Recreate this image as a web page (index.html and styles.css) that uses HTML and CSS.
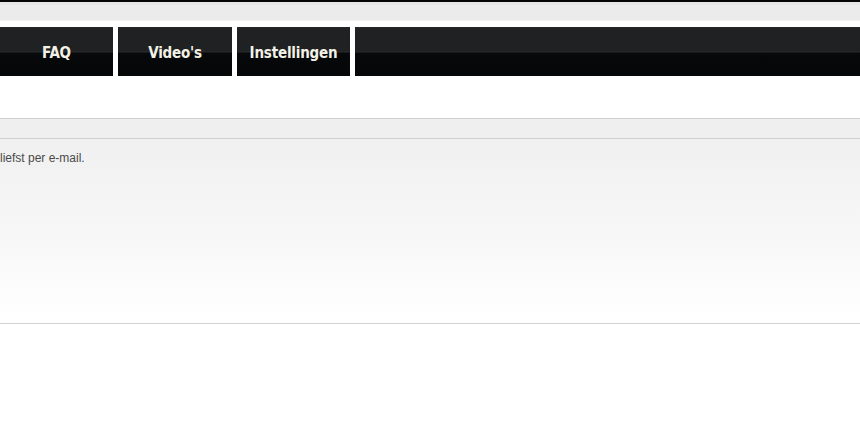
FILE: index.html
```html
<!DOCTYPE html>
<html>
<head>
    <title>FAQ</title>
    <meta charset="UTF-8">
    <meta name="viewport" content="width=device-width, initial-scale=1.0">
    <link rel="stylesheet" href="styles.css">
</head>

<body>
    <div class="topbar"></div>
    <div class="subbar"></div>

    <!-- Main menu -->
    <nav class="menu">
        <a class="menu-item" href="#">FAQ</a>
        <a class="menu-item wide" href="#">Video's</a>
        <a class="menu-item" href="#">Instellingen</a>
        <span class="menu-rest"></span>
    </nav>

    <div class="content">
        <div class="panel-head"></div>
        <div class="panel-body">
            <p class="note">liefst per e-mail.</p>
        </div>
    </div>
</body>
</html>
```

FILE: styles.css
```css
/* Basic Reset */
* {
    box-sizing: border-box;
    margin: 0;
    padding: 0;
}

body {
    background: #ffffff;
    font-family: 'Liberation Sans', Arial, sans-serif;
    width: 860px;
    height: 448px;
    overflow: hidden;
}

/* Top strips */
.topbar {
    height: 2px;
    background: #050505;
}

.subbar {
    height: 19px;
    background: #ebebeb;
    border-top: 3px solid #e6e6e6;
    border-bottom: 1px solid #f2f2f2;
}

/* Menu */
.menu {
    display: grid;
    grid-template-columns: 113px 114px 113px 1fr;
    gap: 5px;
    margin-top: 6px;
    height: 49px;
}

.menu-item,
.menu-rest {
    display: flex;
    align-items: center;
    justify-content: center;
    background: linear-gradient(to bottom, #272a2b 0, #1f2122 2px, #1f2122 24px, #2a2c2d 25px, #070809 26px, #060708 100%);
    color: #f3f1e6;
    text-decoration: none;
    font-family: 'DejaVu Sans', sans-serif;
    font-stretch: condensed;
    font-weight: bold;
    font-size: 15px;
    letter-spacing: -0.2px;
    padding-top: 2px;
}

/* Content panel */
.content {
    margin-top: 42px;
}

.panel-head {
    height: 21px;
    background: #efefef;
    border-top: 1px solid #cfcfcf;
    border-bottom: 1px solid #cfcfcf;
}

.panel-body {
    height: 185px;
    background: linear-gradient(to bottom, #f0f0f0 0%, #f6f6f6 45%, #ffffff 100%);
    border-bottom: 1px solid #d2d2d2;
    padding-top: 12px;
}

.note {
    font-size: 12px;
    color: #4a4a4a;
}
```
